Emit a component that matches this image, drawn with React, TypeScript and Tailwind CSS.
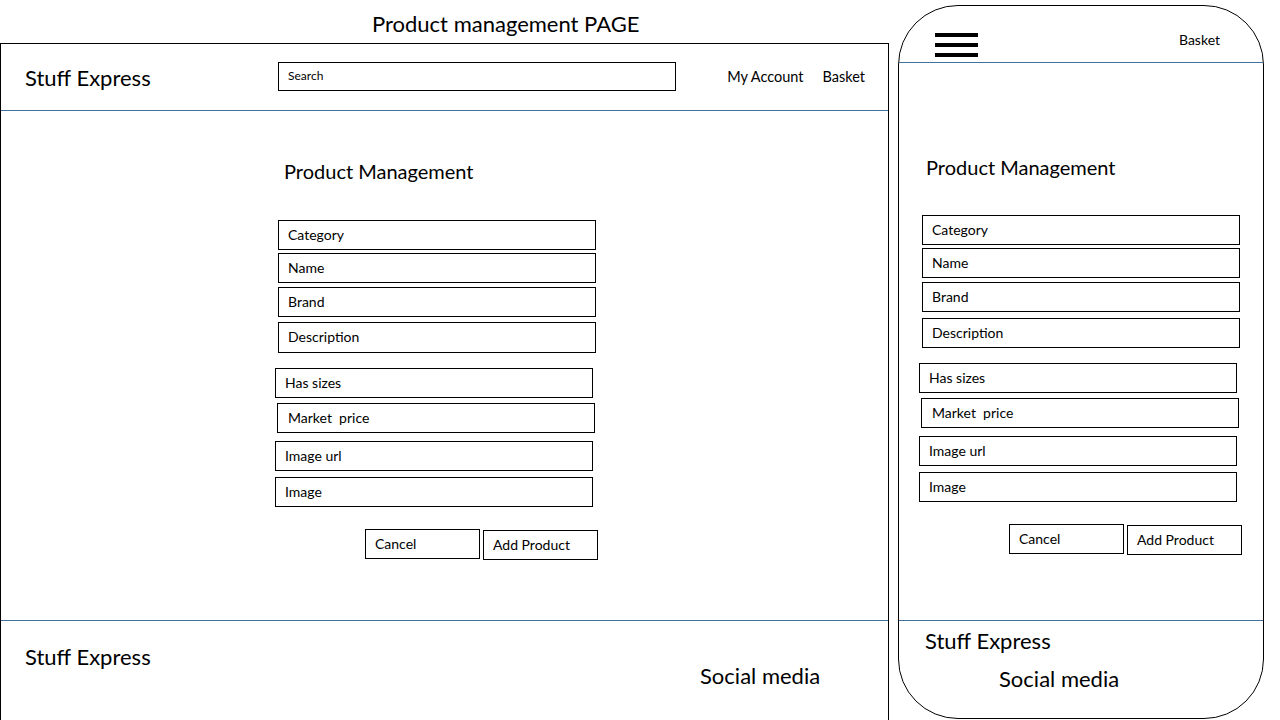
import React from "react";

type FieldProps = {
  label: string;
  className?: string;
};

const Field: React.FC<FieldProps> = ({ label, className }) => (
  <div
    className={`w-[318px] h-[30px] border-[1.5px] border-black flex items-center pl-[9px] pb-[2px] text-[14px] ${className ?? ""}`}
  >
    {label}
  </div>
);

const Btn: React.FC<FieldProps> = ({ label, className }) => (
  <div
    className={`w-[115px] h-[30px] border-[1.5px] border-black flex items-center pl-[9px] pb-[2px] text-[14px] ${className ?? ""}`}
  >
    {label}
  </div>
);

const Hamburger = () => (
  <svg width="43" height="25" viewBox="0 0 43 25">
    <rect x="0" y="0" width="43" height="4" fill="black" />
    <rect x="0" y="10" width="43" height="4" fill="black" />
    <rect x="0" y="20" width="43" height="4" fill="black" />
  </svg>
);

export default function App() {
  return (
    <div
      className="w-[1280px] h-[720px] overflow-hidden bg-white text-black flex"
      style={{ fontFamily: "Lato, 'Open Sans', sans-serif" }}
    >
      {/* desktop */}
      <div className="w-[889px] flex flex-col shrink-0">
        <div className="h-[43px] pl-[372px] pt-[10px] text-[22px] leading-[28px]">
          Product management PAGE
        </div>
        <div className="flex-1 border-t border-l border-r border-black flex flex-col">
          <header className="h-[67px] border-b border-[#41719c] flex items-center pl-[24px] pr-[23px]">
            <span className="w-[253px] text-[22px] leading-[28px] pt-[1px]">Stuff Express</span>
            <div className="w-[398px] h-[29px] border-[1.5px] border-black flex items-center pl-[9px] pb-[1px] text-[12px] -mt-[2px]">
              Search
            </div>
            <nav className="ml-auto flex gap-[19px] text-[14.5px]">
              <span>My Account</span>
              <span>Basket</span>
            </nav>
          </header>
          <main className="h-[509px] pl-[274px] pt-[47px] flex flex-col">
            <h2 className="pl-[9px] text-[20px] leading-[26px]">Product Management</h2>
            <div className="mt-[36px] flex flex-col">
              <Field label="Category" className="ml-[3px] h-[29px]" />
              <Field label="Name" className="ml-[3px] mt-[3px]" />
              <Field label="Brand" className="ml-[3px] mt-[4px]" />
              <Field label="Description" className="ml-[3px] mt-[5px] h-[31px]" />
              <Field label="Has sizes" className="mt-[15px]" />
              <Field label="Market  price" className="ml-[2px] mt-[5px] whitespace-pre pl-[10px]" />
              <Field label="Image url" className="mt-[8px]" />
              <Field label="Image" className="mt-[6px]" />
              <div className="flex ml-[90px] mt-[22px] gap-[3px]">
                <Btn label="Cancel" />
                <Btn label="Add Product" className="mt-[1px]" />
              </div>
            </div>
          </main>
          <footer className="flex-1 border-t border-[#41719c] flex pl-[24px]">
            <span className="text-[22px] leading-[28px] pt-[22px] w-[675px]">Stuff Express</span>
            <span className="text-[22px] leading-[28px] pt-[41px]">Social media</span>
          </footer>
        </div>
      </div>

      {/* mobile */}
      <div className="ml-[9px] mt-[5px] w-[366px] h-[714px] border border-black rounded-[60px] flex flex-col overflow-hidden shrink-0">
        <header className="h-[57px] border-b border-[#41719c] flex items-start pl-[36px] pr-[41px] pt-[27px] shrink-0">
          <Hamburger />
          <span className="ml-auto text-[14px] leading-[18px] -mt-[2px] mr-[2px]">Basket</span>
        </header>
        <main className="h-[557px] pl-[20px] pt-[91px] flex flex-col shrink-0">
          <h2 className="pl-[7px] text-[20px] leading-[26px]">Product Management</h2>
          <div className="mt-[35px] flex flex-col">
            <Field label="Category" className="ml-[3px] h-[29px]" />
            <Field label="Name" className="ml-[3px] mt-[3px]" />
            <Field label="Brand" className="ml-[3px] mt-[4px] h-[29px]" />
            <Field label="Description" className="ml-[3px] mt-[6px] h-[29px]" />
            <Field label="Has sizes" className="mt-[15px] h-[29px]" />
            <Field label="Market  price" className="ml-[2px] mt-[5px] h-[29px] whitespace-pre pl-[10px]" />
            <Field label="Image url" className="mt-[8px] h-[29px]" />
            <Field label="Image" className="mt-[6px] h-[29px]" />
            <div className="flex ml-[90px] mt-[22px] gap-[3px]">
              <Btn label="Cancel" className="h-[29px]" />
              <Btn label="Add Product" className="mt-[1px] h-[29px]" />
            </div>
          </div>
        </main>
        <footer className="flex-1 border-t border-[#41719c] flex flex-col pl-[26px]">
          <span className="text-[22px] leading-[28px] pt-[6px]">Stuff Express</span>
          <span className="text-[22px] leading-[28px] pl-[74px] pt-[10px]">Social media</span>
        </footer>
      </div>
    </div>
  );
}
